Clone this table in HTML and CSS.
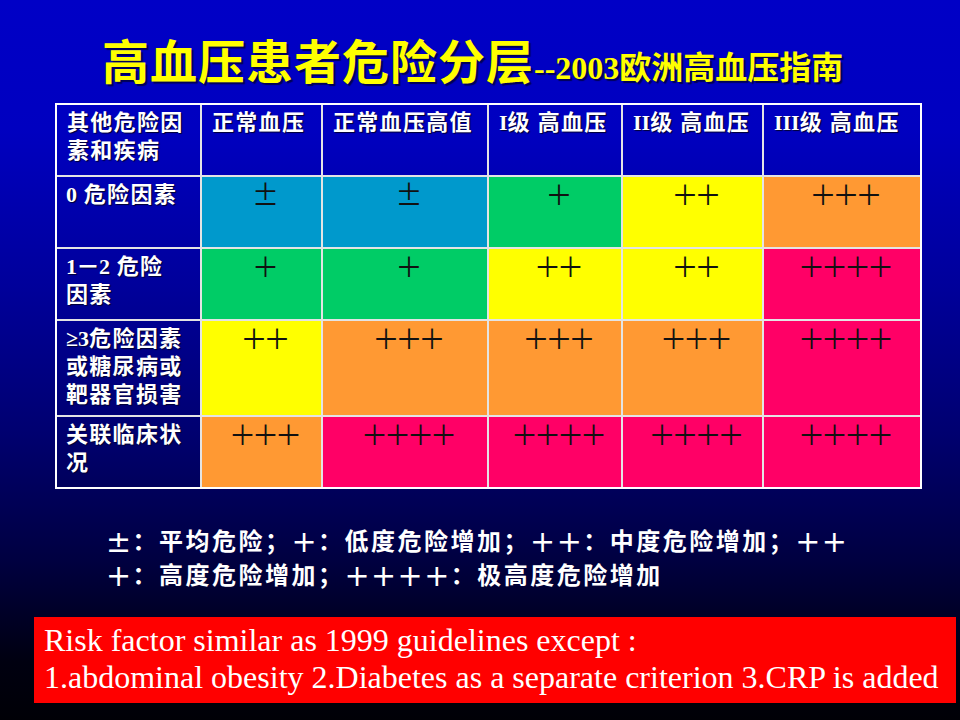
FILE: index.html
```html
<!DOCTYPE html>
<html lang="zh-CN">
<head>
<meta charset="utf-8">
<title>高血压患者危险分层</title>
<link rel="stylesheet" href="styles.css">
</head>
<body>
<div class="slide">
  <h1 class="title"><span class="big">高血压患者危险分层</span><span class="small">--2003欧洲高血压指南</span></h1>

  <div class="grid">
    <div class="cell head">其他危险因素和疾病</div>
    <div class="cell head">正常血压</div>
    <div class="cell head">正常血压高值</div>
    <div class="cell head"><span class="lat">I</span>级 高血压</div>
    <div class="cell head"><span class="lat">II</span>级 高血压</div>
    <div class="cell head last"><span class="lat">III</span>级 高血压</div>

    <div class="cell label"><span class="lat">0</span> 危险因素</div>
    <div class="cell val teal">±</div>
    <div class="cell val teal">±</div>
    <div class="cell val green">＋</div>
    <div class="cell val yellow">＋＋</div>
    <div class="cell val orange last">＋＋＋</div>

    <div class="cell label"><span class="lat">1－2</span> 危险<br>因素</div>
    <div class="cell val green">＋</div>
    <div class="cell val green">＋</div>
    <div class="cell val yellow">＋＋</div>
    <div class="cell val yellow">＋＋</div>
    <div class="cell val pink last">＋＋＋＋</div>

    <div class="cell label"><span class="lat">≥3</span>危险因素<br>或糖尿病或<br>靶器官损害</div>
    <div class="cell val yellow">＋＋</div>
    <div class="cell val orange">＋＋＋</div>
    <div class="cell val orange">＋＋＋</div>
    <div class="cell val orange">＋＋＋</div>
    <div class="cell val pink last">＋＋＋＋</div>

    <div class="cell label bottom">关联临床状<br>况</div>
    <div class="cell val orange bottom">＋＋＋</div>
    <div class="cell val pink bottom">＋＋＋＋</div>
    <div class="cell val pink bottom">＋＋＋＋</div>
    <div class="cell val pink bottom">＋＋＋＋</div>
    <div class="cell val pink bottom last">＋＋＋＋</div>
  </div>

  <p class="legend"><span class="s">±</span>：平均危险；<span class="s">+</span>：低度危险增加；<span class="s">++</span>：中度危险增加；<span class="s">++</span><br><span class="s">+</span>：高度危险增加；<span class="s">++++</span>：极高度危险增加</p>

  <div class="note">
    Risk factor similar as 1999 guidelines except :<br>
    1.abdominal obesity 2.Diabetes as a separate criterion 3.CRP is added
  </div>
</div>
</body>
</html>
```

FILE: styles.css
```css
html, body {
  margin: 0;
  padding: 0;
}

body {
  width: 960px;
  height: 720px;
  overflow: hidden;
  background: linear-gradient(to bottom, #0000c6 0%, #0000c0 18%, #00009a 40%, #000070 60%, #000040 78%, #000010 92%, #000006 100%);
}

.slide {
  width: 960px;
  height: 720px;
  display: flex;
  flex-direction: column;
}

.title {
  margin: 0;
  padding: 33px 0 0 102px;
  height: 52px;
  line-height: 52px;
  color: #ffff00;
  font-weight: bold;
  white-space: nowrap;
  text-shadow: 2px 2px 1px #000055;
}

.title .big {
  font-family: "Noto Sans CJK SC", sans-serif;
  font-size: 47px;
  letter-spacing: 1px;
}

.title .small {
  font-family: "Liberation Serif", "Noto Sans CJK SC", serif;
  font-size: 32px;
}

.grid {
  margin: 18px 0 0 55px;
  width: 867px;
  box-sizing: border-box;
  border: 2px solid #ffffff;
  display: grid;
  grid-template-columns: 145px 121px 166px 134px 141px 156px;
  grid-template-rows: 72px 72px 72px 96px 70px;
}

.cell {
  box-sizing: border-box;
  border-right: 2px solid #e4e4e4;
  border-bottom: 2px solid #e4e4e4;
}

.cell.last {
  border-right: none;
}

.cell.bottom {
  border-bottom: none;
}

.head, .label {
  color: #ffffff;
  font-family: "Liberation Serif", "Noto Sans CJK SC", serif;
  font-weight: bold;
  font-size: 22px;
  line-height: 28px;
  letter-spacing: 1.3px;
  padding: 4px 4px 0 9px;
  text-shadow: 1px 1px 1px #000033;
}

.head {
  padding-left: 10px;
}

.lat {
  font-family: "Liberation Serif", serif;
  letter-spacing: 0;
}

.val {
  text-align: center;
  font-family: "Noto Sans CJK SC", sans-serif;
  font-size: 27px;
  letter-spacing: -4px;
  line-height: 34px;
  color: #111111;
  padding: 0 0 0 4px;
}

.teal { background: #0099cc; }
.green { background: #00cc66; }
.yellow { background: #ffff00; }
.orange { background: #ff9933; }
.pink { background: #ff0066; }

.legend {
  margin: 35px 0 0 106px;
  height: 64px;
  color: #ffffff;
  font-family: "Noto Sans CJK SC", sans-serif;
  font-weight: bold;
  font-size: 24px;
  line-height: 32px;
  letter-spacing: 2.5px;
  white-space: nowrap;
}

.legend .s {
  font-family: "DejaVu Sans", sans-serif;
  font-size: 30px;
  font-weight: normal;
  letter-spacing: 1.4px;
  vertical-align: -2px;
}

.note {
  margin: 29px 0 0 34px;
  width: 922px;
  height: 86px;
  box-sizing: border-box;
  background: #ff0000;
  color: #ffffff;
  font-family: "Liberation Serif", serif;
  font-size: 32px;
  line-height: 37px;
  padding: 5px 0 0 10px;
  white-space: nowrap;
}
```
